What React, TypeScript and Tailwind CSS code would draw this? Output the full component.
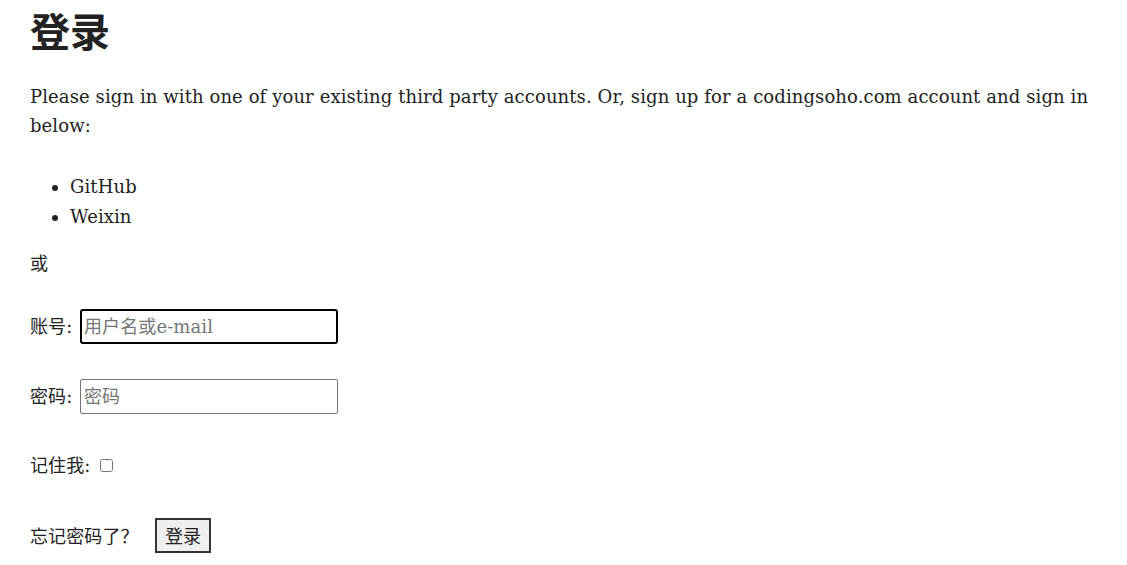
import React from 'react';

const serif = "font-['DejaVu_Serif','Noto_Sans_CJK_SC',serif]";

const LoginPage: React.FC = () => {
  return (
    <div className={`pl-[30px] pr-[30px] text-[18px] text-[#222] tracking-[0.1px] ${serif}`}>
      <h1 className="pt-[6px] text-[40px] leading-[48px] font-bold font-['Noto_Sans_CJK_SC',sans-serif]">登录</h1>

      <p className="mt-[28px] leading-[29px]">
        Please sign in with one of your existing third party accounts. Or, sign up for a codingsoho.com account and sign in below:
      </p>

      <ul className="mt-[32px] list-disc pl-[40px] leading-[30px]">
        <li>GitHub</li>
        <li>Weixin</li>
      </ul>

      {/* 登录表单 */}
      <form className="flex flex-col">
        <div className="mt-[14px] flex h-[35px] items-center">或</div>

        <div className="mt-[28px] flex h-[35px] items-center">
          <span className="w-[50px]">账号:</span>
          <input
            type="text"
            placeholder="用户名或e-mail"
            className="h-[35px] w-[258px] rounded-[3px] border-2 border-black px-[2px] text-[18px] placeholder:text-[#757575] outline-none"
          />
        </div>

        <div className="mt-[35px] flex h-[35px] items-center">
          <span className="w-[50px]">密码:</span>
          <input
            type="password"
            placeholder="密码"
            className="h-[35px] w-[258px] rounded-[2px] border border-[#767676] px-[3px] text-[18px] placeholder:text-[#757575] outline-none"
          />
        </div>

        <div className="mt-[34px] flex h-[35px] items-center">
          <span className="w-[70px]">记住我:</span>
          <input type="checkbox" className="h-[13px] w-[13px]" />
        </div>

        <div className="mt-[35px] flex h-[35px] items-center">
          <span className="w-[125px] font-['Noto_Sans_CJK_SC',sans-serif]">忘记密码了？</span>
          <button
            type="button"
            className="h-[35px] w-[56px] border-2 border-[#333] bg-[#efefef] text-[18px] font-['Noto_Sans_CJK_SC',sans-serif]"
          >
            登录
          </button>
        </div>
      </form>
    </div>
  );
};

export default LoginPage;
